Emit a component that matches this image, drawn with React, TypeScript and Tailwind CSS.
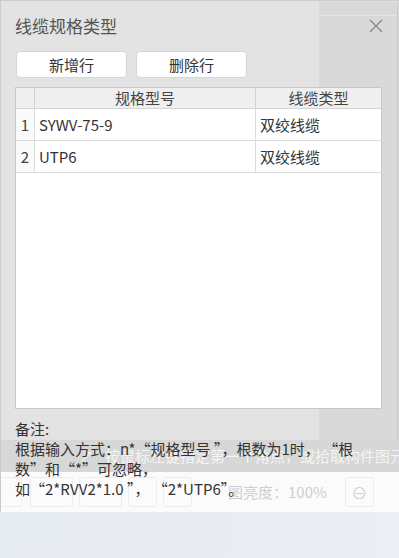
import React from "react";

const font = "font-['Noto_Sans_CJK_SC','Microsoft_YaHei',sans-serif]";

function CloseIcon() {
  return (
    <svg width="14" height="14" viewBox="0 0 14 14" className="shrink-0">
      <path d="M1 1 L13 13 M13 1 L1 13" stroke="#8a8a8a" strokeWidth="1.4" fill="none" />
    </svg>
  );
}

function Segs({ parts }: { parts: string[] }) {
  return (
    <div>
      {parts.map((p, i) => (
        <span key={i}>{p}</span>
      ))}
    </div>
  );
}

function Background() {
  return (
    <div className="absolute inset-0 flex flex-col">
      <div className="flex h-[440px]">
        <div className="flex-1 bg-[#e3e3e3]" />
        <div className="w-[80px] flex flex-col bg-[#e3e3e3] pt-[2px]">
          <div className="flex-1 flex">
            <div className="flex-1 bg-[#d9d9d9] flex flex-col">
              <div className="h-[13px]" />
              <div className="h-[1px] bg-[#f2ebb0]" />
            </div>
            <div className="w-[1px] bg-[#c9c9c9]" />
            <div className="w-[1px] bg-[#dcdcdc]" />
          </div>
        </div>
      </div>
      <div className="h-[32px] bg-[#d7d7d7] flex items-center pl-[80px] gap-[12px] text-[15px] text-[#f4f4f4] whitespace-nowrap overflow-hidden">
        <span className="text-[13px]">↗</span>
        <span>按鼠标左键指定第一个角点，或拾取构件图元</span>
      </div>
      <div className="h-[40px] bg-[#fbfbfb] flex items-center gap-[6px] whitespace-nowrap overflow-hidden">
        <div className="w-[23px] h-[30px] border border-[#ececec] rounded-[3px] -ml-[1px]" />
        <div className="w-[43px] h-[30px] border border-[#ececec] rounded-[3px] ml-[2px]" />
        <div className="w-[43px] h-[30px] border border-[#ececec] rounded-[3px]" />
        <div className="w-[29px] h-[30px] border border-[#ececec] rounded-[3px]" />
        <div className="w-[29px] h-[30px] border border-[#ececec] rounded-[3px]" />
        <span className="ml-[30px] text-[15px] text-[#cfcfcf]">图亮度：100%</span>
        <div className="ml-[12px] w-[29px] h-[30px] border border-[#ececec] rounded-[3px] flex items-center justify-center text-[#d0d0d0] text-[16px]">⊖</div>
      </div>
      <div className="flex-1 bg-gradient-to-r from-[#e6eaf1] to-[#ebeef3]" />
    </div>
  );
}

export default function App() {
  return (
    <div className={`relative w-[399px] h-[558px] overflow-hidden ${font}`}>
      <Background />
      <div className="absolute top-0 left-0 w-[399px] h-[512px] border-l border-t border-[#cccccc] flex flex-col">
        <div className="flex items-center justify-between h-[24px] mt-[13px] pl-[14px] pr-[16px]">
          <span className="text-[17px] leading-[24px] text-[#555555]">线缆规格类型</span>
          <CloseIcon />
        </div>
        <div className="flex gap-[9px] mt-[13px] pl-[15px]">
          <button className="w-[111px] h-[27px] bg-white border border-[#d6d6d6] rounded-[4px] text-[15px] leading-[25px] text-[#333333]">新增行</button>
          <button className="w-[111px] h-[27px] bg-white border border-[#d6d6d6] rounded-[4px] text-[15px] leading-[25px] text-[#333333]">删除行</button>
        </div>
        <div className="mt-[9px] ml-[14px] w-[367px] h-[322px] border border-[#c8c8c8] bg-white flex flex-col text-[15px] text-[#333333]">
          <div className="grid grid-cols-[19px_221px_1fr] h-[21px] bg-[#efefef] border-b border-[#d4d4d4] leading-[20px] text-[#444444]">
            <div className="border-r border-[#d4d4d4]" />
            <div className="border-r border-[#d4d4d4] text-center">规格型号</div>
            <div className="text-center">线缆类型</div>
          </div>
          {[
            ["1", "SYWV-75-9", "双绞线缆"],
            ["2", "UTP6", "双绞线缆"],
          ].map(([n, a, b]) => (
            <div key={n} className="grid grid-cols-[19px_221px_1fr] h-[32px] border-b border-[#dcdcdc] leading-[31px]">
              <div className="border-r border-[#dcdcdc] bg-[#fafafa] text-center text-[#444444]">{n}</div>
              <div className="border-r border-[#dcdcdc] pl-[4px]">{a}</div>
              <div className="pl-[4px]">{b}</div>
            </div>
          ))}
        </div>
        <div className="mt-[10px] pl-[14px] text-[15px] leading-[20px] text-[#333333] whitespace-pre">
          <div>备注:</div>
          <Segs parts={["根据输入方式：", "n*", "“规格型号 ”", "，", "根数为1时，", " “根"]} />
          <Segs parts={["数”", "和", "“*”", "可忽略，"]} />
          <Segs parts={["如", "“2*RVV2*1.0 ”", "， ", "“2*UTP6”", "。"]} />
        </div>
      </div>
    </div>
  );
}
